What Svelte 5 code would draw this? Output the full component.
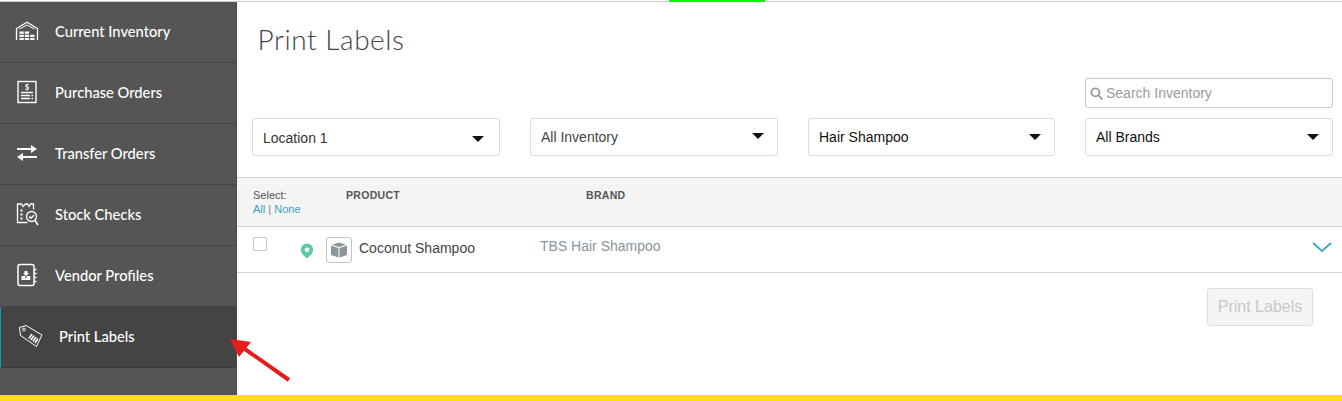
<script>
  const filters = [
    { label: 'Location 1', cls: 'dark' },
    { label: 'All Inventory', cls: 'mid' },
    { label: 'Hair Shampoo', cls: 'black' },
    { label: 'All Brands', cls: 'black' }
  ];
</script>

<div class="page">
  <div class="green"></div>
  <div class="body">
    <nav class="side">
      <a class="item">
        <svg viewBox="0 0 24 20" width="24" height="20" fill="none" stroke="#fff" stroke-width="1.3"><path d="M1.500 19V7.500L12 1.200l10.500 6.300V19"/><path d="M4.500 8 12 4l7.500 4" stroke-width="1"/><path d="M4.500 10.500h4.300v2.300H4.500zM9.800 10.500h4.300v2.300H9.800zM4.500 13.700h4.300V16H4.500zM9.800 13.700h4.300V16H9.800zM15.200 13.700h4.300V16h-4.300zM4.500 17h4.300v2H4.500zM9.800 17h4.300v2H9.800zM15.200 17h4.300v2h-4.300z" fill="#fff" stroke="none"/></svg>
        <span>Current Inventory</span>
      </a>
      <a class="item">
        <svg viewBox="0 0 24 24" width="24" height="24" fill="none" stroke="#fff"><rect x="3" y="1.500" width="18" height="21" stroke-width="1.400"/><text x="12" y="9.500" font-size="7" font-weight="700" text-anchor="middle" fill="#fff" stroke="none" font-family="Lato">$</text><path d="M6 12.500h12M6 15.500h9M6 18.500h9M16.500 15.500H18M16.500 18.500H18" stroke-width="1.300"/></svg>
        <span>Purchase Orders</span>
      </a>
      <a class="item">
        <svg viewBox="0 0 24 16" width="24" height="16" fill="#fff"><path d="M2 3h14V0l6 4-6 4V5H2zM22 11H8V8l-6 4 6 4v-3h14z"/></svg>
        <span>Transfer Orders</span>
      </a>
      <a class="item">
        <svg viewBox="0 0 24 24" width="24" height="24" fill="none" stroke="#fff" stroke-width="1.300"><path d="M12.500 20.500H2.500V2h4l1.500 2.500L10.500 2h2L14 4.500 15.500 2h3v5.500"/><path d="M5.500 8.500h2M5.500 12.500h2M5.500 16.500h2" stroke-width="2"/><circle cx="16.500" cy="14.500" r="5"/><path d="M14.200 14.500l1.700 1.700 3-3" stroke-width="1.500"/><path d="M20 18.500l3 4.500" stroke-width="1.500"/></svg>
        <span>Stock Checks</span>
      </a>
      <a class="item">
        <svg viewBox="0 0 24 24" width="24" height="24" fill="none" stroke="#fff"><rect x="3" y="1.500" width="16" height="21" rx="2" stroke-width="1.500"/><path d="M19 6.500h2.500M19 10.500h2.500M19 14.500h2.500M19 18.500h2.500" stroke-width="1.500"/><path d="M9.500 8h3v2h1v1h-1v1.500h-3V11h-1v-1h1zM6.500 13h3.800v2.500H6.500zM11.500 13h3.800v2.500h-3.800zM6.500 15.500h8.800V17H6.500z" fill="#fff" stroke="none"/></svg>
        <span>Vendor Profiles</span>
      </a>
      <a class="item active">
        <svg viewBox="0 0 26 24" width="26" height="24" fill="none" stroke="#fff" stroke-width="1"><path d="M1.500 3.500 8 1.500l16 9.500-5.500 11.500L2.500 11.500z"/><circle cx="6" cy="5.500" r="1.400"/><path d="M11 14.500l3-4.500M13 16l3-4.500M15 17.500l3-4.500M17 19l3-4.500" stroke-width="1.600"/></svg>
        <span>Print Labels</span>
      </a>
    </nav>

    <main class="content">
      <h1>Print Labels</h1>
      <div class="search-row">
        <label class="search">
          <svg viewBox="0 0 14 14" width="13" height="13" fill="none" stroke="#9b9b9b" stroke-width="2"><circle cx="5.800" cy="5.800" r="4.300"/><path d="M9 9l4 4" stroke-linecap="round"/></svg>
          <span>Search Inventory</span>
        </label>
      </div>
      <div class="filters">
        {#each filters as f}
          <div class="select {f.cls}">
            <span>{f.label}</span>
            <i class="caret"></i>
          </div>
        {/each}
      </div>

      <div class="thead">
        <div class="sel">
          <div>Select:</div>
          <div class="links"><span>All</span> <em>|</em> <span>None</span></div>
        </div>
        <div class="th product">PRODUCT</div>
        <div class="th">BRAND</div>
      </div>

      <div class="row">
        <span class="check"></span>
        <svg class="pin" viewBox="0 0 14 16" width="14" height="16"><path fill-rule="evenodd" fill="#5ccb9f" d="M7 .5a6.200 6.200 0 0 1 6.200 6.200c0 3.600-3.800 6.800-6.200 8.800C4.600 13.500.8 10.300.8 6.700A6.200 6.200 0 0 1 7 .5zm0 3.900a2.300 2.300 0 1 0 0 4.600 2.300 2.300 0 0 0 0-4.600z"/></svg>
        <span class="thumb">
          <svg viewBox="0 0 18 16" width="18" height="16"><path fill="#8b959c" d="M1 3.500 8.500 6v9.500L1 13zM17 3.500 9.500 6v9.500L17 13zM9 .5l7 2.300L9 5.100 2 2.800z"/></svg>
        </span>
        <span class="name">Coconut Shampoo</span>
        <span class="brand">TBS Hair Shampoo</span>
        <svg class="chev" viewBox="0 0 20 10" width="20" height="10" fill="none" stroke="#3aa3bf" stroke-width="1.800"><path d="M1 1l9 8 9-8"/></svg>
      </div>

      <div class="actions">
        <button disabled>Print Labels</button>
      </div>
    </main>
  </div>
  <div class="yellow"></div>
  <svg class="arrow" viewBox="0 0 62 44" width="62" height="44"><path d="M59 41 12 8" stroke="#e61c1c" stroke-width="4" fill="none"/><path d="M0 0 21 3 9 18z" fill="#e61c1c"/></svg>
</div>

<style>
  :global(body) { margin: 0; background: #fff; }
  .page {
    position: relative;
    width: 1342px;
    height: 401px;
    display: flex;
    flex-direction: column;
    overflow: hidden;
    padding-top: 1px;
    box-sizing: border-box;
    font-family: "Liberation Sans", Arial, sans-serif;
  }
  .green {
    position: absolute;
    top: 0;
    left: 669px;
    width: 96px;
    height: 2px;
    background: #0cf00c;
    z-index: 2;
  }
  .body {
    flex: 1;
    display: flex;
    min-height: 0;
    border-top: 1px solid #cfcfcf;
  }
  .side {
    width: 237px;
    flex: none;
    background: #555;
    border-right: 1px solid #4a4a4a;
    box-sizing: border-box;
    font-family: Lato, sans-serif;
  }
  .item {
    height: 61px;
    box-sizing: border-box;
    display: flex;
    align-items: center;
    border-bottom: 1px solid #444;
    padding: 0 0 3px 15px;
    color: #fff;
    font-size: 14.700px;
    font-weight: 500;
  }
  .item svg { flex: none; margin-right: 16px; }
  .active {
    background: #444;
    border-left: 1px solid #0f9ab5;
    border-bottom-color: #3c3c3c;
    padding-left: 17px;
  }
  .active svg { margin-right: 15px; }
  .content {
    flex: 1;
    min-width: 0;
    position: relative;
  }
  h1 {
    margin: 0;
    padding: 20px 0 0 20.600px;
    font: 300 28px/35px Lato, sans-serif;
    color: #444;
    letter-spacing: .55px;
    height: 55px;
    box-sizing: border-box;
  }
  .search-row {
    display: flex;
    justify-content: flex-end;
    padding: 21px 9px 0 0;
  }
  .search {
    width: 248px;
    height: 30px;
    box-sizing: border-box;
    border: 1px solid #c8c8c8;
    border-radius: 3px;
    display: flex;
    align-items: center;
    gap: 3px;
    padding-left: 4px;
    color: #9b9b9b;
    font-size: 14px;
  }
  .filters {
    display: grid;
    grid-template-columns: 248px 248px 247px 248px;
    column-gap: 30px;
    margin: 10px 9px 0 15px;
  }
  .select {
    height: 38px;
    box-sizing: border-box;
    border: 1px solid #dcdcdc;
    border-radius: 3px;
    display: flex;
    align-items: center;
    justify-content: space-between;
    padding: 0 13px 0 10px;
    font-size: 14px;
  }
  .dark { color: #333; padding-right: 15px; }
  .dark span { position: relative; top: 1px; }
  .mid { color: #444; }
  .black { color: #111; }
  .caret {
    width: 0;
    height: 0;
    border-left: 6px solid transparent;
    border-right: 6px solid transparent;
    border-top: 6px solid #111;
    margin-top: 3px;
  }
  .mid .caret { margin-top: -2px; }
  .black .caret { margin-top: 0; }
  .thead {
    margin-top: 21px;
    height: 50px;
    box-sizing: border-box;
    background: #f4f4f4;
    border-top: 1px solid #cfcfcf;
    border-bottom: 1px solid #cfcfcf;
    display: flex;
    padding: 10px 0 0 16px;
    font-size: 10.500px;
    color: #555;
  }
  .sel { width: 93px; line-height: 14px; font-size: 11px; }
  .links { color: #3aa3bf; }
  .links em { font-style: normal; color: #777; }
  .th {
    font-weight: 700;
    letter-spacing: .3px;
    line-height: 14px;
    color: #555;
  }
  .product { width: 240px; }
  .row {
    height: 46px;
    box-sizing: border-box;
    border-bottom: 1px solid #cfcfcf;
    display: flex;
    align-items: center;
    position: relative;
    padding-left: 16px;
    font-size: 14px;
  }
  .check {
    width: 14px;
    height: 14px;
    box-sizing: border-box;
    border: 1px solid #c9c9c9;
    border-radius: 2px;
    position: relative;
    top: -6px;
  }
  .pin { margin-left: 33px; position: relative; top: 1px; }
  .thumb {
    width: 26px;
    height: 26px;
    box-sizing: border-box;
    border: 1px solid #c4c4c4;
    border-radius: 3px;
    display: flex;
    align-items: center;
    justify-content: center;
    margin-left: 12px;
  }
  .name { margin-left: 7px; width: 181px; color: #444; position: relative; top: -2px; }
  .brand { color: #8a949b; position: relative; top: -4px; }
  .chev { margin-left: auto; margin-right: 10px; position: relative; top: -3px; }
  .actions {
    display: flex;
    justify-content: flex-end;
    padding: 15px 29px 0 0;
  }
  button {
    width: 106px;
    height: 38px;
    padding: 0;
    background: #f5f5f5;
    border: 1px solid #dedede;
    border-radius: 3px;
    color: #c8c8c8;
    font: 16px "Liberation Sans", Arial, sans-serif;
  }
  .yellow {
    height: 6px;
    flex: none;
    background: #ffe000;
  }
  .arrow {
    position: absolute;
    left: 230px;
    top: 339px;
  }
</style>
